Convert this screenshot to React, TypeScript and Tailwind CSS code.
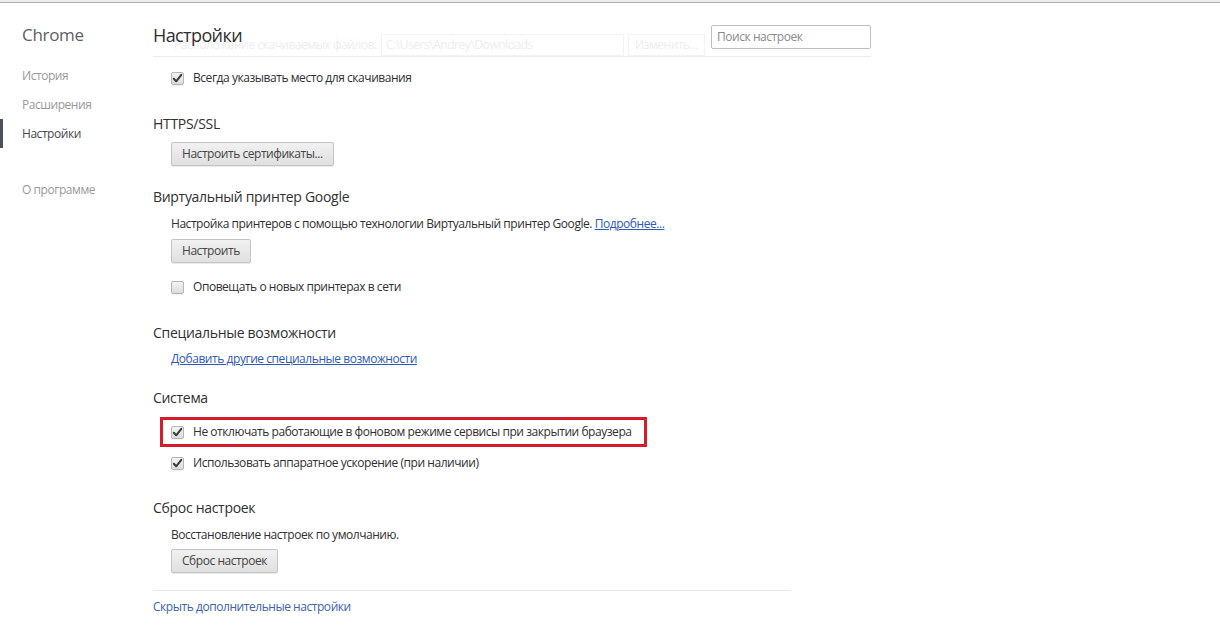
import React from "react";

const font = { fontFamily: '"Open Sans", "Noto Sans", sans-serif' };

function Check({ checked = true }: { checked?: boolean }) {
  return (
    <span className="w-[13px] h-[13px] shrink-0 rounded-[2px] border border-[#b5b5b5] bg-gradient-to-b from-[#f4f4f4] to-[#dcdcdc] flex items-center justify-center shadow-[0_1px_0_rgba(0,0,0,0.05)]">
      {checked && (
        <svg width="11" height="11" viewBox="0 0 11 11">
          <path d="M1.8 5.8 L4.2 8.3 L9.3 1.8" fill="none" stroke="#3a3a3a" strokeWidth="2" strokeLinecap="round" strokeLinejoin="round" />
        </svg>
      )}
    </span>
  );
}

function CheckRow({ label, checked = true }: { label: string; checked?: boolean }) {
  return (
    <div className="h-[20px] flex items-center gap-[9px] pl-[18px] text-[12px] tracking-[-0.45px] text-[#303030] whitespace-nowrap">
      <Check checked={checked} />
      <span>{label}</span>
    </div>
  );
}

function Btn({ children }: { children: React.ReactNode }) {
  return (
    <div className="ml-[18px] self-start h-[24px] px-[10px] flex items-center rounded-[2px] border border-[#c4c4c4] bg-gradient-to-b from-[#f1f1f1] to-[#e0e0e0] shadow-[0_1px_0_rgba(0,0,0,0.08)] text-[12px] tracking-[-0.45px] text-[#444]">
      {children}
    </div>
  );
}

function H({ children }: { children: React.ReactNode }) {
  return <div className="h-[20px] flex items-center text-[14px] tracking-[-0.3px] text-[#303030]">{children}</div>;
}

export default function App() {
  return (
    <div className="w-[1220px] h-[636px] bg-white overflow-hidden flex flex-col" style={font}>
      <div className="h-[2px] bg-[#ececec]" />
      <div className="h-[1px] bg-[#b0b0b0]" />
      <div className="flex flex-1">
        {/* sidebar */}
        <div className="w-[153px] shrink-0 flex flex-col">
          <div className="h-[50px] flex items-end pl-[22px] pb-[6px] text-[17px] tracking-[-0.3px] text-[#5c6166]">Chrome</div>
          <div className="mt-[8px] flex flex-col text-[12px] tracking-[-0.45px] text-[#999]">
            <div className="h-[29px] flex items-center pl-[22px]">История</div>
            <div className="h-[29px] flex items-center pl-[22px]">Расширения</div>
            <div className="h-[29px] flex items-center pl-[19px] border-l-[3px] border-[#4d5157] text-[#464a4f]">Настройки</div>
            <div className="h-[27px]" />
            <div className="h-[29px] flex items-center pl-[22px]">О программе</div>
          </div>
        </div>
        {/* main */}
        <div className="flex flex-col w-[718px]">
          <div className="relative h-[54px] border-b border-[#ececec] flex items-end justify-between">
            <div className="absolute left-[21px] top-[31px] flex items-center gap-[4px] text-[12px] tracking-[-0.45px] text-[#ededed]">
              <span>Расположение скачиваемых файлов:</span>
              <span className="w-[243px] h-[22px] border border-[#f3f3f3] pl-[4px] flex items-center">C:\Users\Andrey\Downloads</span>
              <span className="w-[77px] h-[22px] border border-[#f3f3f3] flex items-center justify-center">Изменить...</span>
            </div>
            <div className="relative h-[40px] flex items-center text-[18px] tracking-[-0.6px] text-[#303030] self-start mt-[12px]">Настройки</div>
            <div className="relative self-start mt-[22px] w-[160px] h-[24px] border border-[#bfbfbf] rounded-[2px] bg-white flex items-center pl-[5px] text-[12px] tracking-[-0.45px] text-[#8a8a8a]">
              Поиск настроек
            </div>
          </div>
          <div className="flex flex-col">
            <div className="mt-[11px]"><CheckRow label="Всегда указывать место для скачивания" /></div>
            <div className="mt-[25px]"><H>HTTPS/SSL</H></div>
            <div className="mt-[9px] flex"><Btn>Настроить сертификаты...</Btn></div>
            <div className="mt-[20px]"><H>Виртуальный принтер Google</H></div>
            <div className="mt-[9px] h-[18px] flex items-center pl-[18px] text-[12px] tracking-[-0.45px] text-[#303030] whitespace-nowrap">
              Настройка принтеров с помощью технологии Виртуальный принтер Google.&nbsp;
              <span className="text-[#2f5bb7] underline">Подробнее...</span>
            </div>
            <div className="mt-[6px] flex"><Btn>Настроить</Btn></div>
            <div className="mt-[14px]"><CheckRow label="Оповещать о новых принтерах в сети" checked={false} /></div>
            <div className="mt-[25px]"><H>Специальные возможности</H></div>
            <div className="mt-[8px] h-[18px] flex items-center pl-[18px] text-[12px] tracking-[-0.45px]">
              <span className="text-[#2f5bb7] underline">Добавить другие специальные возможности</span>
            </div>
            <div className="mt-[19px]"><H>Система</H></div>
            <div className="mt-[10px] ml-[7px] w-[487px] h-[30px] border-[3px] border-[#d41c2c] flex items-center">
              <div className="-ml-[10px]"><CheckRow label="Не отключать работающие в фоновом режиме сервисы при закрытии браузера" /></div>
            </div>
            <div className="mt-[6px]"><CheckRow label="Использовать аппаратное ускорение (при наличии)" /></div>
            <div className="mt-[24px]"><H>Сброс настроек</H></div>
            <div className="mt-[9px] h-[18px] flex items-center pl-[18px] text-[12px] tracking-[-0.45px] text-[#303030]">
              Восстановление настроек по умолчанию.
            </div>
            <div className="mt-[5px] flex"><Btn>Сброс настроек</Btn></div>
            <div className="mt-[17px] w-[638px] h-[1px] bg-[#e6e6e6]" />
            <div className="mt-[7px] h-[18px] flex items-center text-[12px] tracking-[-0.45px] text-[#3d64a8]">Скрыть дополнительные настройки</div>
          </div>
        </div>
      </div>
    </div>
  );
}
